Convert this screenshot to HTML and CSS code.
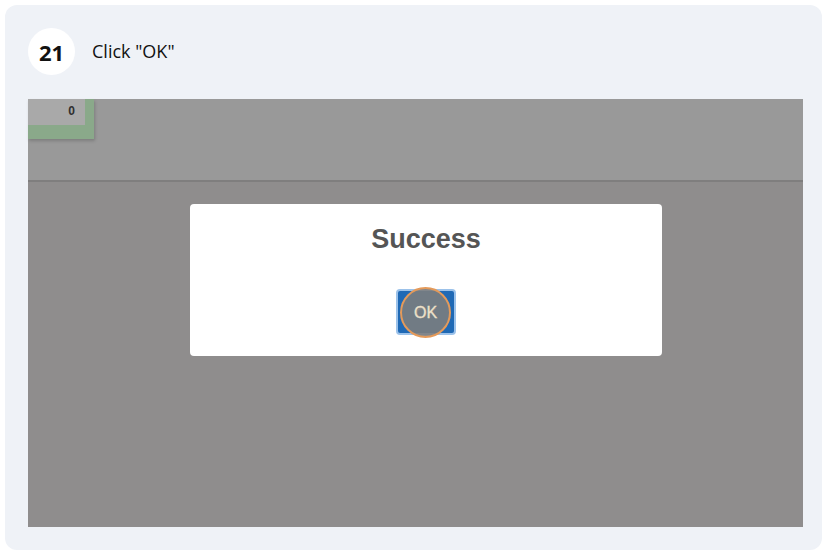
FILE: index.html
```html
<!DOCTYPE html>
<html>
<head>
<meta charset="utf-8">
<link rel="stylesheet" href="styles.css">
</head>
<body>
<div class="card">
  <div class="head">
    <div class="badge">21</div>
    <div class="title">Click "OK"</div>
  </div>
  <div class="shot">
    <div class="top">
      <div class="tile"><span class="num">0</span></div>
    </div>
    <div class="bottom">
      <div class="dialog">
        <div class="dtitle">Success</div>
        <div class="btnwrap">
          <div class="okbtn">OK</div>
          <div class="ring"></div>
        </div>
      </div>
    </div>
  </div>
</div>
</body>
</html>
```
FILE: styles.css
```css
html, body { margin: 0; padding: 0; background: #ffffff; }
body { padding: 5px 5px 0 5px; font-family: "Open Sans", sans-serif; }
.card {
  width: 817px;
  height: 545px;
  background: #eff2f7;
  border-radius: 12px;
  box-sizing: border-box;
  padding: 22px 0 0 23px;
}
.head { display: flex; align-items: center; height: 49px; }
.badge {
  width: 47px; height: 47px; border-radius: 50%;
  background: #ffffff;
  display: flex; align-items: center; justify-content: center;
  font-family: "Open Sans", sans-serif; font-weight: 700; font-size: 22px; color: #111;
}
.title { margin-left: 17px; font-size: 18px; color: #111; padding-bottom: 1px; }
.shot {
  margin-top: 23px;
  width: 775px; height: 428px;
  background: #8f8d8d;
  display: flex; flex-direction: column;
}
.top {
  height: 81px;
  background: #999999;
  border-bottom: 2px solid #7f7e7e;
}
.tile {
  width: 57px; height: 26px;
  background: #a9a9a9;
  border-right: 9px solid #8aa98a;
  border-bottom: 14px solid #8aa98a;
  display: flex; justify-content: flex-end; align-items: flex-start;
  box-shadow: 1px 2px 3px rgba(0,0,0,0.18);
}
.num { font-family: "Liberation Sans", Arial, sans-serif; font-weight: 700; font-size: 12px; color: #2f2f2f; margin: 5px 10px 0 0; }
.bottom { flex: 1; display: flex; justify-content: center; padding-top: 22px; }
.dialog {
  width: 472px; height: 152px;
  background: #ffffff;
  border-radius: 4px;
  margin-left: 21px;
  display: flex; flex-direction: column; align-items: center;
}
.dtitle {
  font-family: "Liberation Sans", Arial, sans-serif; font-weight: 700;
  font-size: 27px; color: #555555; margin-top: 19px; line-height: 32px;
}
.btnwrap { position: relative; margin-top: 34px; }
.okbtn {
  width: 60px; height: 46px;
  background: #1f69b5;
  border: 2px solid #9cc2ea;
  border-radius: 4px;
  box-sizing: border-box;
  font-family: "Liberation Sans", Arial, sans-serif; font-size: 15px; color: #e9dcc6;
  display: flex; align-items: center; justify-content: center;
}
.ring {
  position: absolute; left: 4px; top: -2px;
  width: 51px; height: 51px; box-sizing: border-box;
  border-radius: 50%;
  border: 2px solid #e49a5a;
  background: rgba(125,125,125,0.88);
  display: flex; align-items: center; justify-content: center;
}
.ring::after {
  content: "OK";
  font-family: "Liberation Sans", Arial, sans-serif; font-size: 16px; font-weight: 400; color: #ece0ca;
  -webkit-text-stroke: 0.3px #ece0ca;
}
```
